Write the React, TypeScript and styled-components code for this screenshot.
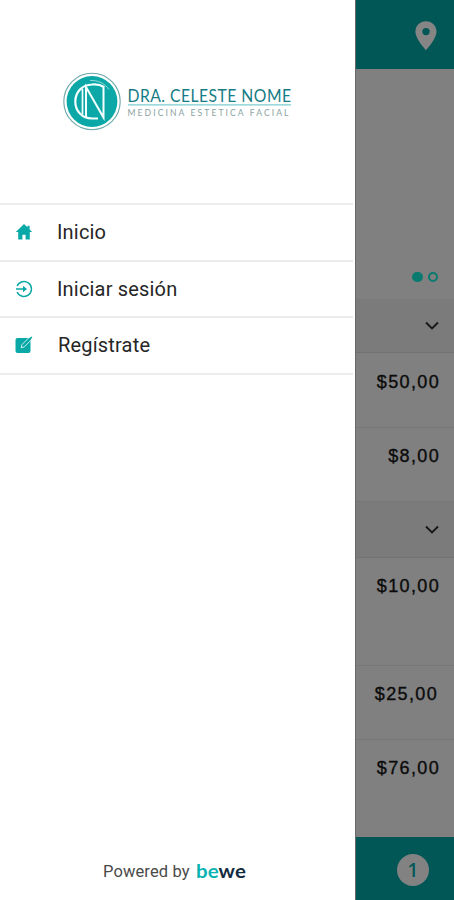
import React from 'react';
import styled, { createGlobalStyle } from 'styled-components';

const GlobalStyle = createGlobalStyle`
  * { box-sizing: border-box; }
  body { margin: 0; background: #808080; }
`;

const Screen = styled.div`
  display: grid;
  grid-template-columns: 355px 1fr;
  width: 454px;
  height: 900px;
  overflow: hidden;
  font-family: Roboto, sans-serif;
`;

const Drawer = styled.aside`
  display: flex;
  flex-direction: column;
  background: #fff;
`;

const Brand = styled.header`
  height: 203px;
  padding: 70px 0 0 60px;
  svg { display: block; overflow: visible; }
`;

const Menu = styled.nav`
  width: 353px;
  border-top: 2px solid #ececec;
`;

const MenuItem = styled.a<{ $indent?: number }>`
  display: flex;
  align-items: center;
  height: 56.5px;
  padding-left: 14px;
  border-bottom: 2px solid #ececec;
  color: #262626;
  font-size: 20px;
  line-height: 24px;
  svg { flex: none; width: 20px; height: 20px; margin-right: ${p => 23 + (p.$indent ?? 0)}px; }
`;

const MenuLabel = styled.span`
  letter-spacing: 0.18px;
`;

const Powered = styled.footer`
  display: flex;
  gap: 6px;
  height: 39px;
  margin-top: auto;
  padding-left: 103px;
  color: #4a4a4a;
  font-size: 16.5px;
  line-height: 22px;
  letter-spacing: 0.12px;
  white-space: nowrap;
  svg { display: block; overflow: visible; }
`;

const Page = styled.main`
  display: flex;
  flex-direction: column;
  background: #808080;
  border-left: 1px solid #686868;
`;

const TopBar = styled.div`
  height: 69px;
  padding: 20px 0 0 58px;
  background: #005756;
`;

const Gallery = styled.div`
  display: flex;
  align-items: flex-end;
  gap: 5px;
  height: 230px;
  padding: 0 0 17px 56px;
`;

const Dot = styled.i<{ $active?: boolean }>`
  width: 10.5px;
  height: 10.5px;
  border: 2px solid #087a70;
  border-radius: 50%;
  background: ${p => (p.$active ? '#087a70' : 'transparent')};
`;

const Section = styled.div<{ $height: number }>`
  display: flex;
  justify-content: flex-end;
  align-items: center;
  height: ${p => p.$height}px;
  padding-right: 15px;
  background: #7b7b7b;
  border-bottom: 1px solid #727272;
`;

const PriceRow = styled.div<{ $height: number; $top?: number; $right?: number; $last?: boolean }>`
  height: ${p => p.$height}px;
  padding: ${p => p.$top ?? 16}px ${p => p.$right ?? 14}px 0 0;
  border-bottom: ${p => (p.$last ? 'none' : '1px solid #777')};
  color: #0b0b0b;
  font: 400 18px/24px 'Liberation Sans', sans-serif;
  -webkit-text-stroke: 0.35px #0b0b0b;
  letter-spacing: 1.35px;
  text-align: right;
`;

const BottomBar = styled.div`
  flex: 1;
  padding: 17px 0 0 41px;
  background: #005756;
`;

const Count = styled.span`
  display: flex;
  align-items: center;
  justify-content: center;
  width: 32px;
  height: 32px;
  border-radius: 50%;
  background: #828282;
  color: #005756;
  font: 500 20px/32px 'Noto Sans', sans-serif;
`;

const ClinicLogo = () => (
  <svg width="240" height="65" viewBox="0 0 240 65">
    <circle cx="32" cy="31.5" r="28.2" fill="#fff" stroke="#6aa5a8" strokeWidth="1.1" />
    <circle cx="32" cy="31.5" r="25.4" fill="#0ca8a8" />
    <g fill="none" stroke="#f4ffff">
      <path d="M44 17C40 14.500 36 14 32 14.500C22 15 15.300 22 15.300 31.500S22 48.500 32 48.500H38" strokeWidth="2.2" />
      <path d="M22.500 19V44.500" strokeWidth="1.7" />
      <path d="M26 48V17L43.500 47.500V16" strokeWidth="2" />
      <path d="M30 10.500c8-.5 15 3 19 9" strokeWidth="1" opacity=".55" />
    </g>
    <text x="67.5" y="31.5" textLength="164" lengthAdjust="spacingAndGlyphs" fontFamily="Lato, sans-serif" fontSize="17" letterSpacing=".5" fill="#167c85">DRA. CELESTE NOME</text>
    <path d="M68 34.8h163" stroke="#7ccdd0" strokeWidth="1.3" />
    <text x="67.5" y="45.5" textLength="161" fontFamily="Lato, sans-serif" fontSize="8.6" fill="#8ba3a2">MEDICINA ESTETICA FACIAL</text>
  </svg>
);

const HomeIcon = () => (
  <svg viewBox="0 0 20 20" fill="#08a9a6">
    <path d="M10 2 1.8 10h2.4v7.4h4.2v-4.7h3.2v4.7h4.2V10h2.4l-2.6-2.6V3.7h-2.1v1.5Z" />
  </svg>
);

const LoginIcon = () => (
  <svg viewBox="0 0 20 20" fill="none" stroke="#08a9a6" strokeWidth="1.4">
    <path d="M3.1 7A7.5 7.5 0 1 1 3.1 13M2 10h9" />
    <path d="m9 6.7 4 3.3-4 3.3Z" fill="#08a9a6" stroke="none" />
  </svg>
);

const RegisterIcon = () => (
  <svg viewBox="0 0 20 20">
    <rect x="1.5" y="3" width="15" height="15" rx="2" fill="#08a9a6" />
    <path d="m7.2 12.8.7-3.1 7-7 3.1-.8-.9 3.2-6.8 6.8Z" fill="#08a9a6" stroke="#fff" strokeWidth=".8" />
    <path d="m14.9 4.8 3-2.8" stroke="#08a9a6" strokeWidth="1.5" />
  </svg>
);

const PinIcon = () => (
  <svg width="24" height="32" viewBox="0 0 24 32">
    <path d="M12 1.3C6 1.3 1.4 5.8 1.4 11.6 1.4 19.1 12 30.3 12 30.3s10.5-11.2 10.5-18.7C22.5 5.8 18 1.3 12 1.3Zm0 14a3.7 3.7 0 1 1 0-7.4 3.7 3.7 0 0 1 0 7.4Z" fill="#858585" />
  </svg>
);

const Chevron = () => (
  <svg width="14" height="10" viewBox="0 0 14 10" fill="none" stroke="#161616" strokeWidth="1.8">
    <path d="m1 1.5 6 6 6-6" />
  </svg>
);

const BeweLogo = () => (
  <svg width="50" height="22" viewBox="0 0 50 22">
    <text x="0" y="17" textLength="50" lengthAdjust="spacingAndGlyphs" fontFamily="Lato, sans-serif" fontWeight="700" fontSize="18">
      <tspan fill="#08b3b3">be</tspan><tspan fill="#122b3e">we</tspan>
    </text>
  </svg>
);

export default function App() {
  return (
    <>
      <GlobalStyle />
      <Screen>
        <Drawer>
          <Brand><ClinicLogo /></Brand>
          <Menu>
            <MenuItem><HomeIcon /><MenuLabel>Inicio</MenuLabel></MenuItem>
            <MenuItem><LoginIcon /><MenuLabel>Iniciar sesión</MenuLabel></MenuItem>
            <MenuItem $indent={1}><RegisterIcon /><MenuLabel>Regístrate</MenuLabel></MenuItem>
          </Menu>
          <Powered><span>Powered by</span><BeweLogo /></Powered>
        </Drawer>
        <Page>
          <TopBar><PinIcon /></TopBar>
          <Gallery><Dot $active /><Dot /></Gallery>
          <Section $height={54}><Chevron /></Section>
          <PriceRow $height={75} $top={17}>$50,00</PriceRow>
          <PriceRow $height={74}>$8,00</PriceRow>
          <Section $height={56}><Chevron /></Section>
          <PriceRow $height={108}>$10,00</PriceRow>
          <PriceRow $height={74} $right={16}>$25,00</PriceRow>
          <PriceRow $height={97} $last>$76,00</PriceRow>
          <BottomBar><Count>1</Count></BottomBar>
        </Page>
      </Screen>
    </>
  );
}
